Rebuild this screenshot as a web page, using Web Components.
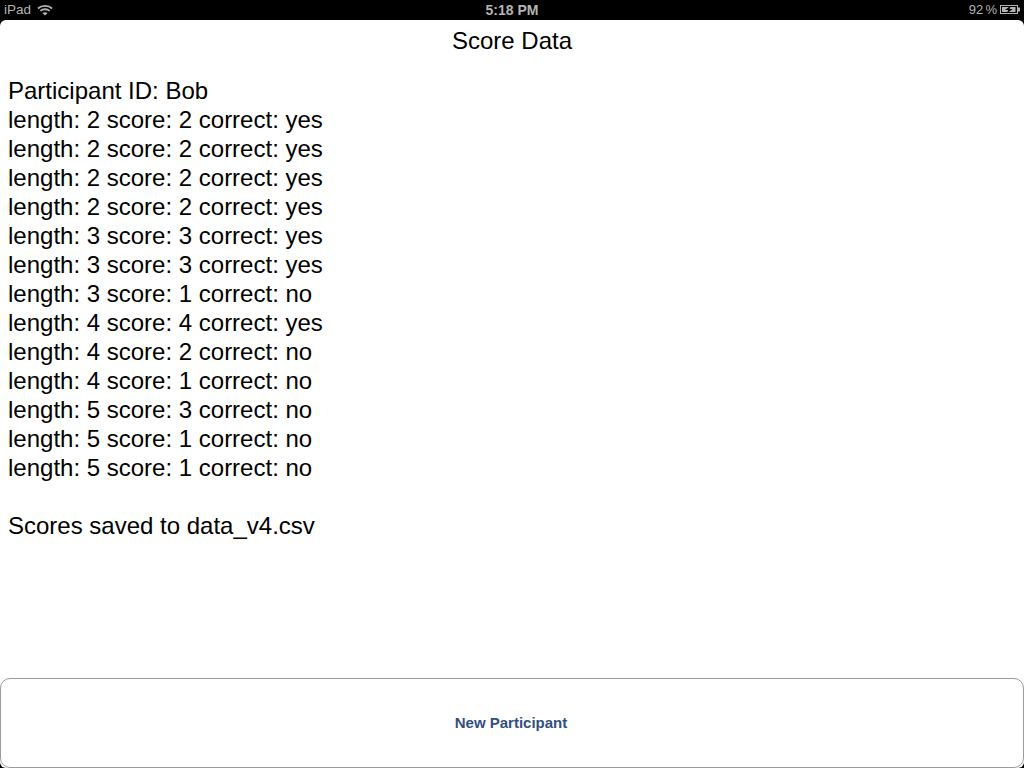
<!DOCTYPE html>
<html>
<head>
<meta charset="utf-8">
<title>Score Data</title>
<style>
html, body { margin: 0; height: 100%; background: #000; }
body { width: 1024px; height: 768px; overflow: hidden; font-family: "Liberation Sans", Arial, sans-serif; }
</style>
</head>
<body>
<ipad-screen>
    <status-bar slot="status"></status-bar>
    <nav-title>Score Data</nav-title>
    <score-log participant="Bob" file="data_v4.csv"></score-log>
    <action-button slot="footer">New Participant</action-button>
</ipad-screen>

<script>
const screenTmpl = document.createElement('template');
screenTmpl.innerHTML = `
<style>
:host { display: flex; flex-direction: column; width: 1024px; height: 768px; background: #000; }
#page {
    flex: 1;
    min-height: 0;
    display: flex;
    flex-direction: column;
    background: #fff;
    border-radius: 6px;
}
#main { flex: 1; min-height: 0; }
</style>
<slot name="status"></slot>
<div id="page">
    <div id="main"><slot></slot></div>
    <slot name="footer"></slot>
</div>
`;

class IpadScreen extends HTMLElement {
    constructor() {
        super();
        this.attachShadow({ mode: 'open' });
        this.shadowRoot.appendChild(screenTmpl.content.cloneNode(true));
    }
}

const statusTmpl = document.createElement('template');
statusTmpl.innerHTML = `
<style>
:host {
    display: grid;
    grid-template-columns: 1fr auto 1fr;
    align-items: center;
    height: 20px;
    padding: 0 4px;
    box-sizing: border-box;
    background: #000;
    color: #b4b4b4;
    font: 14px/18px "Liberation Sans", Arial, sans-serif;
}
#left, #right { display: flex; align-items: center; }
#left { gap: 6px; }
#right { justify-content: flex-end; gap: 3px; }
#carrier { font-size: 13.5px; }
#time { font-weight: bold; }
#battery-level { font-size: 13px; word-spacing: -1.5px; }
#battery { margin-top: -1px; }
svg { display: block; }
</style>
<div id="left">
    <span id="carrier">iPad</span>
    <svg width="16" height="12" viewBox="0 0 17 12" fill="none" stroke="#b4b4b4" stroke-width="1.9">
        <path d="M1 4.4 C5 .6 12 .6 16 4.4"/>
        <path d="M3.6 7 C6.2 4.6 10.8 4.6 13.4 7"/>
        <path d="M8.5 11.8 L5.7 9.2 C7.4 8 9.6 8 11.3 9.2 Z" fill="#b4b4b4" stroke="none"/>
    </svg>
</div>
<div id="time">5:18 PM</div>
<div id="right">
    <span id="battery-level">92 %</span>
    <svg id="battery" width="20" height="9" viewBox="0 0 20 9">
        <rect x=".5" y=".5" width="17" height="8" fill="none" stroke="#b4b4b4"/>
        <rect x="2" y="2" width="13.5" height="5" fill="#b4b4b4"/>
        <rect x="18" y="2.5" width="2" height="4" fill="#b4b4b4"/>
        <path d="M11 .6 L5 5 H8.2 L6.8 8.4 L12.8 4 H9.6 Z" fill="#000"/>
    </svg>
</div>
`;

class StatusBar extends HTMLElement {
    constructor() {
        super();
        this.attachShadow({ mode: 'open' });
        this.shadowRoot.appendChild(statusTmpl.content.cloneNode(true));
    }
}

const titleTmpl = document.createElement('template');
titleTmpl.innerHTML = `
<style>
:host {
    display: block;
    padding-top: 6px;
    height: 44px;
    box-sizing: border-box;
    text-align: center;
    color: #000;
    font: 24px/29px "Liberation Sans", Arial, sans-serif;
}
</style>
<slot></slot>
`;

class NavTitle extends HTMLElement {
    constructor() {
        super();
        this.attachShadow({ mode: 'open' });
        this.shadowRoot.appendChild(titleTmpl.content.cloneNode(true));
    }
}

const scores = [
    [2, 2, 'yes'], [2, 2, 'yes'], [2, 2, 'yes'], [2, 2, 'yes'],
    [3, 3, 'yes'], [3, 3, 'yes'], [3, 1, 'no'],
    [4, 4, 'yes'], [4, 2, 'no'], [4, 1, 'no'],
    [5, 3, 'no'], [5, 1, 'no'], [5, 1, 'no'],
];

const logTmpl = document.createElement('template');
logTmpl.innerHTML = `
<style>
:host {
    display: block;
    padding: 12px 8px 0;
    color: #000;
    font: 24px/29px "Liberation Sans", Arial, sans-serif;
}
.line { height: 29px; white-space: pre; }
</style>
<div id="lines"></div>
`;

class ScoreLog extends HTMLElement {
    constructor() {
        super();
        this.attachShadow({ mode: 'open' });
        this.shadowRoot.appendChild(logTmpl.content.cloneNode(true));
        const lines = this.shadowRoot.querySelector('#lines');
        const addLine = text => {
            const line = document.createElement('div');
            line.className = 'line';
            line.textContent = text;
            lines.appendChild(line);
        };
        addLine(`Participant ID: ${this.getAttribute('participant')}`);
        scores.forEach(s => addLine(`length: ${s[0]} score: ${s[1]} correct: ${s[2]}`));
        addLine('');
        addLine(`Scores saved to ${this.getAttribute('file')}`);
    }
}

const buttonTmpl = document.createElement('template');
buttonTmpl.innerHTML = `
<style>
:host {
    display: flex;
    align-items: center;
    justify-content: center;
    height: 90px;
    padding: 0 2px 2px 0;
    box-sizing: border-box;
    background: #fff;
    border: 1px solid #9a9a9a;
    border-radius: 10px;
    color: #324f85;
    font: bold 15px/17px "Liberation Sans", Arial, sans-serif;
    cursor: pointer;
}
</style>
<slot></slot>
`;

class ActionButton extends HTMLElement {
    constructor() {
        super();
        this.attachShadow({ mode: 'open' });
        this.shadowRoot.appendChild(buttonTmpl.content.cloneNode(true));
    }
}

customElements.define('ipad-screen', IpadScreen);
customElements.define('status-bar', StatusBar);
customElements.define('nav-title', NavTitle);
customElements.define('score-log', ScoreLog);
customElements.define('action-button', ActionButton);
</script>
</body>
</html>
